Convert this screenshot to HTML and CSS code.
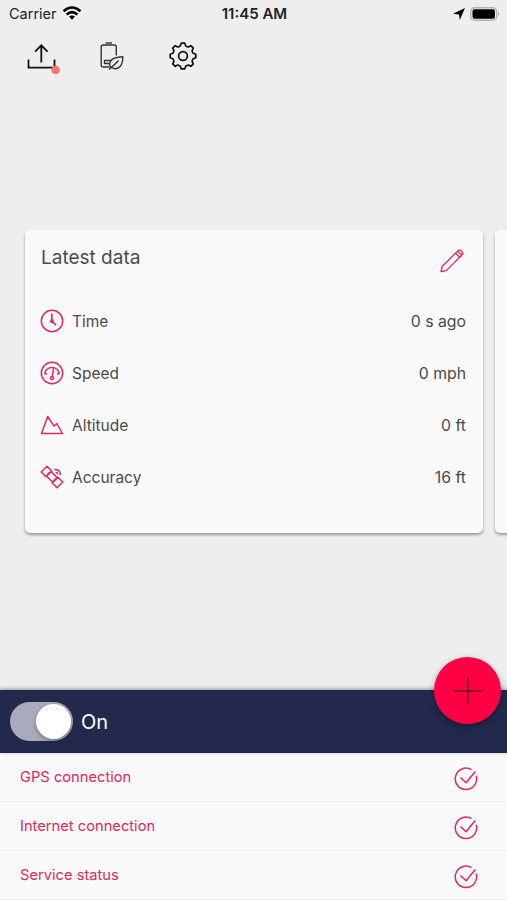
FILE: index.html
```html
<!DOCTYPE html>
<html lang="en">

<head>
  <meta charset="UTF-8">
  <title>Tracker</title>
  <link rel="stylesheet" href="styles.css">
</head>

<body>
  <div class="status-bar">
    <div class="carrier">
      <span>Carrier</span>
      <svg width="20" height="14" viewBox="0 0 20 14">
        <g fill="none" stroke="#000" stroke-width="2.6">
          <path d="M1.500 5.200Q10-2.200 18.500 5.200"/>
          <path d="M4.600 8.500Q10 3.800 15.400 8.500"/>
        </g>
        <path d="M7 10.600Q10 8.300 13 10.600L10 13.700Z"/>
      </svg>
    </div>
    <span class="clock">11:45 AM</span>
    <div class="indicators">
      <svg width="12" height="12" viewBox="0 0 12 12"><path d="M12 0L6.800 12 6.100 6.400 0 5.800Z"/></svg>
      <svg width="30" height="14" viewBox="0 0 30 14">
        <rect x=".7" y=".7" width="26" height="12.600" rx="4" fill="#eee" stroke="#b3b3b3" stroke-width="1.400"/>
        <rect x="2.500" y="2.200" width="22.500" height="9.600" rx="2"/>
        <path d="M28 4.800Q30 7 28 9.200Z" fill="#aaa"/>
      </svg>
    </div>
  </div>

  <div class="toolbar">
    <svg class="upload" width="34" height="32" viewBox="0 0 34 32">
      <g fill="none" stroke="#111" stroke-width="1.800">
        <path d="M2.500 17.500V25.600H28.500V17.500"/>
        <path d="M15.300 20.500V3.500M9.100 9.700L15.300 3.300 21.500 9.700"/>
      </g>
      <circle cx="29.600" cy="28" r="4.300" fill="#ff7466"/>
    </svg>
    <svg class="battery" width="24" height="28" viewBox="0 0 24 28">
      <g fill="none" stroke="#333" stroke-width="1.400" stroke-linejoin="round">
        <path d="M5.500 1H12"/>
        <path d="M9 25H3.200Q1.200 25 1.200 23V5Q1.200 3 3.200 3H14.300Q16.300 3 16.300 5V13.500"/>
        <path d="M10.500 18.500H4.500V21.500H9"/>
        <path d="M10.500 26.500Q7.800 18.500 14.500 16.200 18 15 22.800 14.800 23 23.500 18 26 14 27.900 10.500 24.500M9 27.500Q15 22.500 18.500 18.500"/>
      </g>
    </svg>
    <svg class="gear" width="28" height="28" viewBox="-14 -14 28 28">
      <path fill="none" stroke="#111" stroke-width="1.700" stroke-linejoin="round" d="M-1.800-12.800H1.800L2.700-10.200Q4-9.200 5.300-9.100L7.780-10.300 10.300-7.780 9.100-5.300Q9.200-4 10.200-2.700L12.800-1.800V1.800L10.200 2.700Q9.200 4 9.100 5.300L10.300 7.780 7.780 10.300 5.300 9.100Q4 9.200 2.700 10.200L1.800 12.800H-1.800L-2.700 10.200Q-4 9.200-5.300 9.100L-7.780 10.300-10.300 7.780-9.100 5.300Q-9.200 4-10.200 2.700L-12.800 1.800V-1.800L-10.200-2.700Q-9.200-4-9.100-5.300L-10.300-7.780-7.780-10.300-5.300-9.100Q-4-9.200-2.700-10.200Z"/>
      <circle r="4.400" fill="none" stroke="#111" stroke-width="1.700"/>
    </svg>
  </div>

  <div class="cards">
    <div class="card">
      <div class="card-header">
        <h2>Latest data</h2>
        <svg class="icon" width="26" height="26" viewBox="0 0 26 26">
          <path d="M2 23.500L3.200 18.500 18.800 2.900Q20.500 1.200 22.600 3.200 24.600 5.300 22.900 7L7.300 22.600Z"/>
          <path d="M16.500 5.200L20.600 9.300M18.600 3.100L22.700 7.200"/>
        </svg>
      </div>
      <div class="data-row">
        <svg class="icon" width="24" height="24" viewBox="0 0 24 24">
          <circle cx="12" cy="12" r="10.700"/>
          <path d="M11.800 4.500V12L16 16.200" stroke-width="1.700"/>
          <circle class="solid" cx="12" cy="12.300" r="1.200"/>
        </svg>
        <span>Time</span>
        <span class="value">0 s ago</span>
      </div>
      <div class="data-row">
        <svg class="icon" width="24" height="24" viewBox="0 0 24 24">
          <circle cx="12" cy="12" r="10.700"/>
          <path d="M4.700 12.800A7.400 7.400 0 0 1 19.300 12.800M4.300 12.500L7 13.100M19.700 12.500L17 13.100M13.500 7.500L12.300 15.500"/>
          <circle cx="12" cy="17" r="1.500"/>
        </svg>
        <span>Speed</span>
        <span class="value">0 mph</span>
      </div>
      <div class="data-row">
        <svg class="icon" width="24" height="24" viewBox="0 0 24 24">
          <path d="M1.500 20.500L7.700 3.500 14 13.200 16.800 10.500 22.500 20.500Z"/>
        </svg>
        <span>Altitude</span>
        <span class="value">0 ft</span>
      </div>
      <div class="data-row">
        <svg class="icon" width="24" height="24" viewBox="0 0 24 24">
          <path d="M1.200 7L7 1.200 11.800 6 6 11.800ZM12.200 18L18 12.200 22.800 17 17 22.800Z"/>
          <path d="M11.500 7L17 12.500 12.500 17 7 11.500Q7.500 7.500 11.500 7Z"/>
          <path d="M15.500 7.300Q17.500 7.300 17.700 9.300M14.500 4.500Q20 4 20.500 10"/>
        </svg>
        <span>Accuracy</span>
        <span class="value">16 ft</span>
      </div>
    </div>
    <div class="card"></div>
  </div>

  <div class="panel">
    <div class="switch-bar">
      <div class="switch">
        <div class="knob"></div>
      </div>
      <span>On</span>
      <button type="button" class="add-btn" aria-label="Add">
        <svg width="30" height="30" viewBox="0 0 30 30"><path d="M15 1V29M1 15H29" stroke="#760028" stroke-width="1.500"/></svg>
      </button>
    </div>
    <div class="check-row">
      <span>GPS connection</span>
      <svg class="icon" width="24" height="24" viewBox="0 0 24 24">
        <path d="M17.500 2.700A10.700 10.700 0 1 0 22.200 8.700M6.500 10.500L12 15.700 21.300 4.500"/>
      </svg>
    </div>
    <div class="check-row">
      <span>Internet connection</span>
      <svg class="icon" width="24" height="24" viewBox="0 0 24 24">
        <path d="M17.500 2.700A10.700 10.700 0 1 0 22.200 8.700M6.500 10.500L12 15.700 21.300 4.500"/>
      </svg>
    </div>
    <div class="check-row">
      <span>Service status</span>
      <svg class="icon" width="24" height="24" viewBox="0 0 24 24">
        <path d="M17.500 2.700A10.700 10.700 0 1 0 22.200 8.700M6.500 10.500L12 15.700 21.300 4.500"/>
      </svg>
    </div>
  </div>
</body>

</html>
```
FILE: styles.css
```css
* {
  box-sizing: border-box;
}

body {
  font-family: Inter, "Liberation Sans", sans-serif;
  background-color: #eeeeee;
  color: #4a4a4a;
  margin: 0;
  height: 900px;
  display: flex;
  flex-direction: column;
  overflow: hidden;
}

svg {
  display: block;
  flex-shrink: 0;
}

.status-bar {
  display: grid;
  grid-template-columns: 1fr auto 1fr;
  align-items: center;
  height: 27px;
  padding: 0 7px 0 9px;
  font-size: 14.5px;
  color: #222;
}

.carrier,
.indicators {
  display: flex;
  align-items: center;
  gap: 5px;
}

.carrier svg {
  margin-top: -2px;
}

.indicators {
  justify-content: flex-end;
}

.clock {
  font-size: 15px;
  font-weight: 600;
}

.toolbar {
  display: flex;
  align-items: flex-start;
  height: 203px;
  padding: 15px 0 0 26px;
}

.battery {
  margin-left: 40px;
}

.gear {
  margin-left: 45px;
}

.cards {
  display: flex;
  gap: 12px;
  padding: 4px 0 10px 25px;
  margin-top: -4px;
  overflow: hidden;
}

.card {
  width: 458px;
  height: 303px;
  flex-shrink: 0;
  padding: 14px 17px 0 16px;
  background-color: #fafafa;
  border-radius: 5px;
  box-shadow: 0 2px 3px rgba(0, 0, 0, 0.35);
}

.card-header {
  display: flex;
  justify-content: space-between;
  height: 51px;
}

.card-header h2 {
  margin: 0;
  font-size: 19px;
  font-weight: 400;
  line-height: 27px;
}

.icon {
  fill: none;
  stroke: #e5265f;
  stroke-width: 1.5;
  stroke-linejoin: round;
}

.icon .solid {
  fill: #e5265f;
}

.card-header .icon {
  margin: 4px 1px 0 0;
  stroke-width: 1.3;
}

.data-row {
  display: flex;
  align-items: center;
  gap: 8px;
  height: 52px;
  margin-left: -1px;
  font-size: 15.5px;
}

.value {
  margin-left: auto;
  font-size: 15.8px;
}

.panel {
  margin-top: auto;
  background-color: #fafafa;
}

.switch-bar {
  position: relative;
  display: flex;
  align-items: center;
  gap: 8px;
  height: 63px;
  padding-left: 10px;
  background-color: #23284d;
  box-shadow: 0 -1px 4px rgba(0, 0, 0, 0.4);
  color: #fff;
  font-size: 20px;
}

.switch {
  width: 63px;
  height: 39px;
  padding: 2px;
  border-radius: 20px;
  background-color: #a9aabb;
}

.knob {
  width: 35px;
  height: 35px;
  margin-left: auto;
  border-radius: 50%;
  background-color: #fff;
  box-shadow: 0 2px 4px rgba(0, 0, 0, 0.3);
}

.add-btn {
  position: absolute;
  top: -33px;
  right: 6px;
  display: flex;
  align-items: center;
  justify-content: center;
  width: 67px;
  height: 67px;
  padding: 0;
  border: none;
  border-radius: 50%;
  background-color: #ff0045;
  box-shadow: 0 2px 6px rgba(0, 0, 0, 0.35);
}

.check-row {
  display: flex;
  align-items: center;
  justify-content: space-between;
  height: 49px;
  padding: 0 29px 0 20px;
  border-bottom: 1px solid #eeeef0;
  color: #e5265f;
  font-size: 14.7px;
}

.check-row .icon {
  margin-top: 3px;
}
```
